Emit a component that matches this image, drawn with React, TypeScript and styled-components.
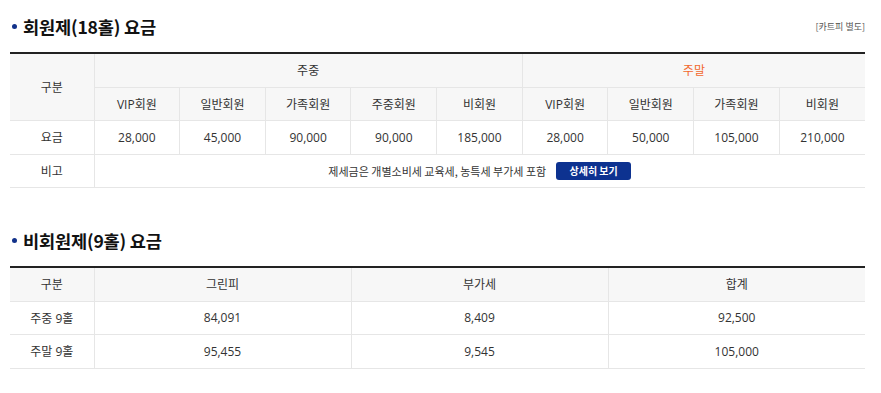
import React from "react";
import styled, { createGlobalStyle } from "styled-components";

const Global = createGlobalStyle`
  html, body { margin: 0; padding: 0; background: #fff; }
  body { font-family: "Open Sans", "Noto Sans CJK KR", sans-serif; color: #333; }
`;

const Page = styled.div`
  width: 855px;
  padding: 0 0 0 10px;
`;

const Section = styled.section<{ $gap?: number }>`
  margin-top: ${(p) => p.$gap ?? 0}px;
`;

const TitleBar = styled.div`
  height: 52px;
  display: flex;
  align-items: center;
  justify-content: space-between;
`;

const Title = styled.h2`
  margin: 0;
  display: flex;
  align-items: center;
  gap: 6px;
  font-family: "Noto Sans CJK KR", sans-serif;
  font-size: 17.6px;
  font-weight: 700;
  color: #111;
  letter-spacing: -0.2px;
  &::before {
    content: "";
    width: 5px;
    height: 5px;
    border-radius: 50%;
    background: #12328a;
    margin-left: 2px;
  }
`;

const Note = styled.span`
  font-family: "Noto Sans CJK KR", sans-serif;
  font-size: 9px;
  color: #555;
`;

const Table = styled.table`
  width: 855px;
  table-layout: fixed;
  border-collapse: collapse;
  border-top: 2px solid #222;
  font-size: 12px;
`;

const Cell = styled.td<{ $head?: boolean; $color?: string }>`
  height: 32.5px;
  padding: 0;
  text-align: center;
  vertical-align: middle;
  font-weight: 400;
  background: ${(p) => (p.$head ? "#f7f7f7" : "#fff")};
  color: ${(p) => p.$color ?? "#333"};
  border-bottom: 1px solid #e6e6e6;
  border-left: 1px solid #e6e6e6;
  &:first-child { border-left: none; }
`;

const SubHead = styled(Cell)`
  &:first-child { border-left: 1px solid #e6e6e6; }
`;

const InlineRow = styled.div`
  display: flex;
  align-items: center;
  justify-content: center;
  gap: 10px;
  font-family: "Noto Sans CJK KR", sans-serif;
  font-size: 11px;
`;

const Button = styled.button`
  width: 75px;
  height: 18px;
  border: none;
  border-radius: 3px;
  background: #0d3290;
  color: #fff;
  font-family: "Noto Sans CJK KR", sans-serif;
  font-size: 10px;
  font-weight: 700;
  padding: 0;
  cursor: pointer;
`;

const dayTypes = ["VIP회원", "일반회원", "가족회원", "주중회원", "비회원"];
const endTypes = ["VIP회원", "일반회원", "가족회원", "비회원"];
const fees = ["28,000", "45,000", "90,000", "90,000", "185,000", "28,000", "50,000", "105,000", "210,000"];

const nine = [
  ["주중 9홀", "84,091", "8,409", "92,500"],
  ["주말 9홀", "95,455", "9,545", "105,000"],
];

export default function App() {
  return (
    <Page>
      <Global />
      <Section>
        <TitleBar>
          <Title>회원제(18홀) 요금</Title>
          <Note>[카트피 별도]</Note>
        </TitleBar>
        <Table>
          <colgroup>
            <col style={{ width: 84 }} />
            {fees.map((_, i) => (
              <col key={i} />
            ))}
          </colgroup>
          <thead>
            <tr>
              <Cell as="th" $head rowSpan={2}>구분</Cell>
              <Cell as="th" $head colSpan={5}>주중</Cell>
              <Cell as="th" $head colSpan={4} $color="#f2682e">주말</Cell>
            </tr>
            <tr>
              {[...dayTypes, ...endTypes].map((t, i) => (
                <SubHead as="th" $head key={i}>
                  {t}
                </SubHead>
              ))}
            </tr>
          </thead>
          <tbody>
            <tr>
              <Cell>요금</Cell>
              {fees.map((f, i) => (
                <Cell key={i}>{f}</Cell>
              ))}
            </tr>
            <tr>
              <Cell>비고</Cell>
              <Cell colSpan={9}>
                <InlineRow>
                  <span>제세금은 개별소비세 교육세, 농특세 부가세 포함</span>
                  <Button>상세히 보기</Button>
                </InlineRow>
              </Cell>
            </tr>
          </tbody>
        </Table>
      </Section>
      <Section $gap={26}>
        <TitleBar>
          <Title>비회원제(9홀) 요금</Title>
        </TitleBar>
        <Table>
          <colgroup>
            <col style={{ width: 84 }} />
            <col />
            <col />
            <col />
          </colgroup>
          <thead>
            <tr>
              {["구분", "그린피", "부가세", "합계"].map((t) => (
                <Cell as="th" $head key={t}>
                  {t}
                </Cell>
              ))}
            </tr>
          </thead>
          <tbody>
            {nine.map((r) => (
              <tr key={r[0]}>
                {r.map((c, i) => (
                  <Cell key={i}>{c}</Cell>
                ))}
              </tr>
            ))}
          </tbody>
        </Table>
      </Section>
    </Page>
  );
}
